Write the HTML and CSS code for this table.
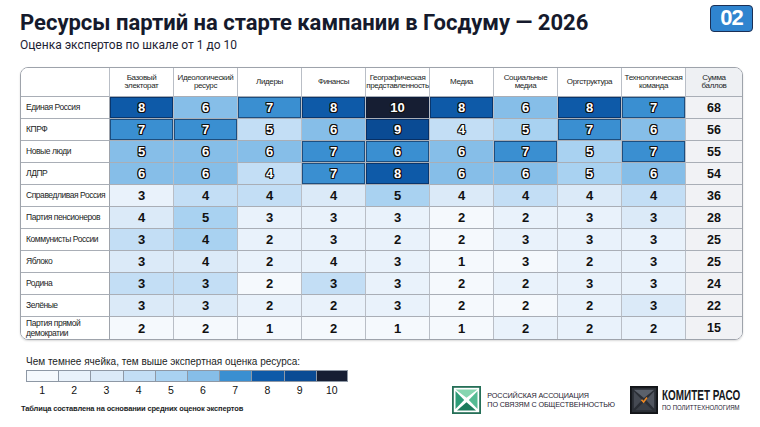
FILE: index.html
```html
<!DOCTYPE html>
<html lang="ru">
<head>
<meta charset="utf-8">
<title>Ресурсы партий</title>
<link rel="stylesheet" href="styles.css">
</head>
<body>
<div class="page">
  <header class="head">
    <div class="titles">
      <h1 class="title">Ресурсы партий на старте кампании в Госдуму — 2026</h1>
      <p class="subtitle">Оценка экспертов по шкале от 1 до 10</p>
    </div>
    <div class="badge">02</div>
  </header>

  <div class="tablewrap">
    <table class="grid">
      <colgroup>
        <col class="col-name">
        <col class="col-d"><col class="col-d"><col class="col-d"><col class="col-d"><col class="col-d"><col class="col-d"><col class="col-d"><col class="col-d"><col class="col-d">
        <col class="col-sum">
      </colgroup>
      <thead>
        <tr class="hrow">
          <th class="hname"></th>
          <th>Базовый<br>электорат</th>
          <th>Идеологический<br>ресурс</th>
          <th>Лидеры</th>
          <th>Финансы</th>
          <th>Географическая<br>представленность</th>
          <th>Медиа</th>
          <th>Социальные<br>медиа</th>
          <th>Оргструктура</th>
          <th>Технологическая<br>команда</th>
          <th class="hsum">Сумма<br>баллов</th>
        </tr>
      </thead>
      <tbody>
        <tr>
          <td class="name">Единая Россия</td>
          <td class="v s8 w">8</td><td class="v s6 w">6</td><td class="v s7 w">7</td><td class="v s8 w">8</td><td class="v s10 w">10</td><td class="v s8 w">8</td><td class="v s6 w">6</td><td class="v s8 w">8</td><td class="v s7 w">7</td>
          <td class="sum">68</td>
        </tr>
        <tr>
          <td class="name">КПРФ</td>
          <td class="v s7 w">7</td><td class="v s7 w">7</td><td class="v s4 w">5</td><td class="v s6 w">6</td><td class="v s9 w">9</td><td class="v s4 w">4</td><td class="v s5 w">5</td><td class="v s7 w">7</td><td class="v s6 w">6</td>
          <td class="sum">56</td>
        </tr>
        <tr>
          <td class="name">Новые люди</td>
          <td class="v s6 w">5</td><td class="v s6 w">6</td><td class="v s6 w">6</td><td class="v s7 w">7</td><td class="v s7 w">6</td><td class="v s6 w">6</td><td class="v s7 w">7</td><td class="v s5 w">5</td><td class="v s7 w">7</td>
          <td class="sum">55</td>
        </tr>
        <tr>
          <td class="name">ЛДПР</td>
          <td class="v s6 w">6</td><td class="v s6 w">6</td><td class="v s4 w">4</td><td class="v s7 w">7</td><td class="v s8 w">8</td><td class="v s6 w">6</td><td class="v s6 w">6</td><td class="v s5 w">5</td><td class="v s6 w">6</td>
          <td class="sum">54</td>
        </tr>
        <tr>
          <td class="name">Справедливая Россия</td>
          <td class="v s2">3</td><td class="v s4">4</td><td class="v s4">4</td><td class="v s3">4</td><td class="v s5">5</td><td class="v s3">4</td><td class="v s4">4</td><td class="v s3">4</td><td class="v s4">4</td>
          <td class="sum">36</td>
        </tr>
        <tr>
          <td class="name">Партия пенсионеров</td>
          <td class="v s3">4</td><td class="v s5">5</td><td class="v s2">3</td><td class="v s2">3</td><td class="v s2">3</td><td class="v s1">2</td><td class="v s2">2</td><td class="v s2">3</td><td class="v s3">3</td>
          <td class="sum">28</td>
        </tr>
        <tr>
          <td class="name">Коммунисты России</td>
          <td class="v s4">3</td><td class="v s5">4</td><td class="v s2">2</td><td class="v s2">3</td><td class="v s2">2</td><td class="v s1">2</td><td class="v s2">3</td><td class="v s2">3</td><td class="v s2">3</td>
          <td class="sum">25</td>
        </tr>
        <tr>
          <td class="name">Яблоко</td>
          <td class="v s3">3</td><td class="v s3">4</td><td class="v s2">2</td><td class="v s2">4</td><td class="v s2">3</td><td class="v s1">1</td><td class="v s1">3</td><td class="v s2">2</td><td class="v s2">3</td>
          <td class="sum">25</td>
        </tr>
        <tr>
          <td class="name">Родина</td>
          <td class="v s4">3</td><td class="v s4">3</td><td class="v s1">2</td><td class="v s4">3</td><td class="v s2">3</td><td class="v s1">2</td><td class="v s2">2</td><td class="v s2">3</td><td class="v s2">3</td>
          <td class="sum">24</td>
        </tr>
        <tr>
          <td class="name">Зелёные</td>
          <td class="v s3">3</td><td class="v s3">3</td><td class="v s2">2</td><td class="v s2">2</td><td class="v s2">3</td><td class="v s1">2</td><td class="v s1">2</td><td class="v s2">2</td><td class="v s3">3</td>
          <td class="sum">22</td>
        </tr>
        <tr>
          <td class="name two">Партия прямой<br>демократии</td>
          <td class="v s1">2</td><td class="v s1">2</td><td class="v s1">1</td><td class="v s1">2</td><td class="v s1">1</td><td class="v s1">1</td><td class="v s2">2</td><td class="v s2">2</td><td class="v s2">2</td>
          <td class="sum">15</td>
        </tr>
      </tbody>
    </table>
  </div>

  <footer class="foot">
    <div class="legend">
      <p class="legend-title">Чем темнее ячейка, тем выше экспертная оценка ресурса:</p>
      <div class="scale">
        <div class="step"><span class="sw s1"></span><span class="lbl">1</span></div>
        <div class="step"><span class="sw s2"></span><span class="lbl">2</span></div>
        <div class="step"><span class="sw s3"></span><span class="lbl">3</span></div>
        <div class="step"><span class="sw s4"></span><span class="lbl">4</span></div>
        <div class="step"><span class="sw s5"></span><span class="lbl">5</span></div>
        <div class="step"><span class="sw s6"></span><span class="lbl">6</span></div>
        <div class="step"><span class="sw s7"></span><span class="lbl">7</span></div>
        <div class="step"><span class="sw s8"></span><span class="lbl">8</span></div>
        <div class="step"><span class="sw s9"></span><span class="lbl">9</span></div>
        <div class="step"><span class="sw s10"></span><span class="lbl">10</span></div>
      </div>
      <p class="note">Таблица составлена на основании средних оценок экспертов</p>
    </div>

    <div class="logos">
      <div class="logo raso">
        <svg class="logo-icon" width="29" height="28" viewBox="0 0 29 28" aria-hidden="true">
          <rect x="0.9" y="0.9" width="27.2" height="26.2" fill="#ffffff" stroke="#256f57" stroke-width="1.8"/>
          <polygon points="3.5,3.5 25.5,3.5 14.5,11.8" fill="#86d6b0"/>
          <polygon points="3.5,5 3.5,23 12.2,14" fill="#2d9c77"/>
          <polygon points="25.5,5 25.5,23 16.8,14" fill="#55bb93"/>
          <polygon points="5,24.5 24,24.5 14.5,16.2" fill="#1c7a5c"/>
        </svg>
        <div class="logo-text">
          <span>РОССИЙСКАЯ АССОЦИАЦИЯ</span>
          <span>ПО СВЯЗЯМ С ОБЩЕСТВЕННОСТЬЮ</span>
        </div>
      </div>
      <div class="logo kom">
        <svg class="logo-icon" width="28" height="28" viewBox="0 0 28 28" aria-hidden="true">
          <rect x="0.9" y="0.9" width="26.2" height="26.2" fill="#2a2e35" stroke="#121418" stroke-width="1.8"/>
          <polygon points="3.8,3.8 24.2,3.8 14,12" fill="#5b616b"/>
          <polygon points="3.8,5.3 3.8,22.7 12,14" fill="#454a53"/>
          <polygon points="24.2,5.3 24.2,22.7 16,14" fill="#50555f"/>
          <polygon points="5.3,24.2 22.7,24.2 14,16" fill="#3a3f47"/>
          <polyline points="11.5,13.8 13.6,16 17,11.6" fill="none" stroke="#f08a24" stroke-width="1.6"/>
        </svg>
        <div class="logo-text kom-text">
          <span class="kom-big">КОМИТЕТ РАСО</span>
          <span class="kom-small">ПО ПОЛИТТЕХНОЛОГИЯМ</span>
        </div>
      </div>
    </div>
  </footer>
</div>
</body>
</html>
```

FILE: styles.css
```css
* { box-sizing: border-box; }
html, body { margin: 0; padding: 0; background: #ffffff; }
body {
  width: 760px;
  height: 427px;
  overflow: hidden;
  font-family: "Roboto", "Liberation Sans", sans-serif;
  color: #171c2c;
}
.page { padding: 6px 7px 0 20px; }

.head { display: flex; justify-content: space-between; align-items: flex-start; }
.title {
  margin: 4px 0 0 0;
  font-size: 22px;
  line-height: 26px;
  font-weight: 700;
  color: #151a2c;
}
.subtitle {
  margin: 2px 0 0 0;
  font-size: 12px;
  line-height: 15px;
  color: #1d2233;
}
.badge {
  width: 43px;
  height: 27px;
  margin-top: -1px;
  background: #2f84cf;
  border: 1.5px solid #1b2f55;
  border-radius: 4px;
  color: #ffffff;
  font-family: "Liberation Sans", sans-serif;
  font-weight: 700;
  font-size: 22px;
  line-height: 24px;
  letter-spacing: -1px;
  text-align: center;
}

.tablewrap {
  margin-top: 14px;
  width: 723px;
  border: 1px solid #9ea3ab;
  border-radius: 8px;
  overflow: hidden;
  box-shadow: 0 1px 2px rgba(0,0,0,0.15);
}
.grid {
  width: 721px;
  border-collapse: separate;
  border-spacing: 0;
  table-layout: fixed;
  font-family: "Liberation Sans", sans-serif;
}
.col-name { width: 89px; }
.col-d { width: 64px; }
.col-sum { width: 56px; }

.grid th, .grid td {
  padding: 0;
  border-right: 1px solid #b9bec6;
  border-bottom: 1px solid #a9aeb6;
  text-align: center;
  vertical-align: middle;
  white-space: nowrap;
}
.grid th:last-child, .grid td:last-child { border-right: none; }
.grid tbody tr:last-child td { border-bottom: none; }

.hrow { height: 29px; }
.grid th {
  font-size: 8px;
  line-height: 8px;
  font-weight: 400;
  letter-spacing: -0.35px;
  color: #1c1f26;
  background: #ffffff;
}
.grid th.hsum { background: #eef0f3; }
.grid tbody tr { height: 22px; }

.name {
  text-align: left !important;
  padding-left: 5px !important;
  font-size: 8.5px;
  line-height: 9px;
  letter-spacing: -0.45px;
  color: #1b1e25;
  background: #ffffff;
  border-right-color: #9ea3ab !important;
}
.name.two { line-height: 9.5px; padding-top: 1px !important; }
.v {
  font-size: 13px;
  font-weight: 700;
  color: #111111;
}
.v.w {
  color: #ffffff;
  text-shadow: 1px 0 0 #111, -1px 0 0 #111, 0 1px 0 #111, 0 -1px 0 #111,
               1px 1px 0 #111, -1px -1px 0 #111, 1px -1px 0 #111, -1px 1px 0 #111;
}
.sum {
  font-size: 12.5px;
  font-weight: 700;
  color: #111111;
  background: #f1f2f5;
}

.s1 { background: #f5f9fd; }
.s2 { background: #e9f2fb; }
.s3 { background: #dbeaf8; }
.s4 { background: #c3def5; }
.s5 { background: #a9d2f1; }
.s6 { background: #86bee8; }
.s7 { background: #3a8fd1; }
.s8 { background: #0e5aa8; }
.s9 { background: #0a4b94; }
.s10 { background: #161e33; }
.v.s7, .v.s8, .v.s9, .v.s10 { box-shadow: inset 0 0 0 1px rgba(5,25,60,0.55); }

.foot {
  display: flex;
  justify-content: space-between;
  align-items: flex-end;
  margin-top: 15px;
}
.legend-title {
  margin: 0 0 0 6px;
  font-family: "Liberation Sans", sans-serif;
  font-size: 10px;
  line-height: 13px;
  color: #1b1e25;
}
.scale { display: flex; margin: 2px 0 0 6px; }
.step { display: flex; flex-direction: column; align-items: center; width: 32.2px; }
.sw {
  display: block;
  width: 100%;
  height: 12px;
  border: 1px solid #8e98a5;
  border-right-width: 0;
}
.step:last-child .sw { border-right-width: 1px; }
.lbl {
  margin-top: 2px;
  font-family: "Liberation Sans", sans-serif;
  font-size: 10.5px;
  line-height: 12px;
  color: #111;
}
.note {
  margin: 8px 0 12px 1px;
  font-family: "Liberation Sans", sans-serif;
  font-size: 7.5px;
  line-height: 10px;
  font-weight: 700;
  letter-spacing: -0.15px;
  color: #1b1e25;
}

.logos { display: flex; align-items: center; gap: 15px; margin-bottom: 12px; margin-right: 13px; }
.logo { display: flex; align-items: center; gap: 6px; }
.kom { gap: 4px; }
.logo-icon { display: block; flex: none; }
.logo-text { display: flex; flex-direction: column; }
.raso .logo-text span {
  font-family: "Liberation Sans", sans-serif;
  font-size: 7.2px;
  line-height: 9.5px;
  letter-spacing: -0.1px;
  color: #1e2230;
  white-space: nowrap;
}
.kom-text { width: 78px; }
.kom-big, .kom-small {
  display: block;
  white-space: nowrap;
  transform-origin: left center;
  font-family: "Liberation Sans", sans-serif;
}
.kom-big {
  font-size: 14px;
  line-height: 15px;
  font-weight: 700;
  color: #151820;
  transform: scaleX(0.71);
}
.kom-small {
  font-size: 7.5px;
  line-height: 9px;
  color: #1e2230;
  transform: scaleX(0.8);
}
```
